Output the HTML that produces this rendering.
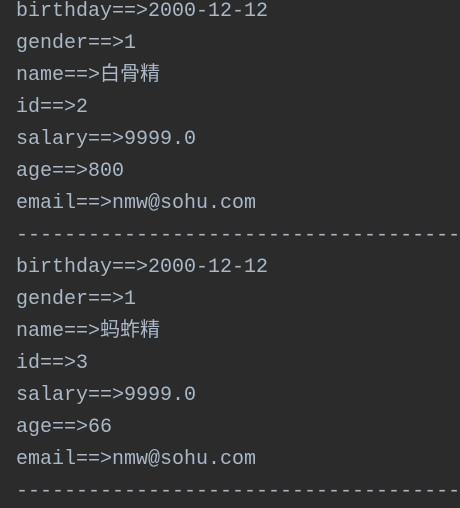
<html><head><style>
body{margin:0;background:#2b2b2b;width:460px;height:497px;overflow:hidden;position:relative}
pre{margin:0;position:absolute;left:16px;top:-4px;width:444px;overflow:hidden;font-family:"Liberation Mono","Noto Sans CJK SC",monospace;font-size:20px;line-height:32px;color:#a9b7c6}
</style></head><body><pre>birthday==&gt;2000-12-12
gender==&gt;1
name==&gt;白骨精
id==&gt;2
salary==&gt;9999.0
age==&gt;800
email==&gt;nmw@sohu.com
-------------------------------------
birthday==&gt;2000-12-12
gender==&gt;1
name==&gt;蚂蚱精
id==&gt;3
salary==&gt;9999.0
age==&gt;66
email==&gt;nmw@sohu.com
-------------------------------------</pre></body></html>
